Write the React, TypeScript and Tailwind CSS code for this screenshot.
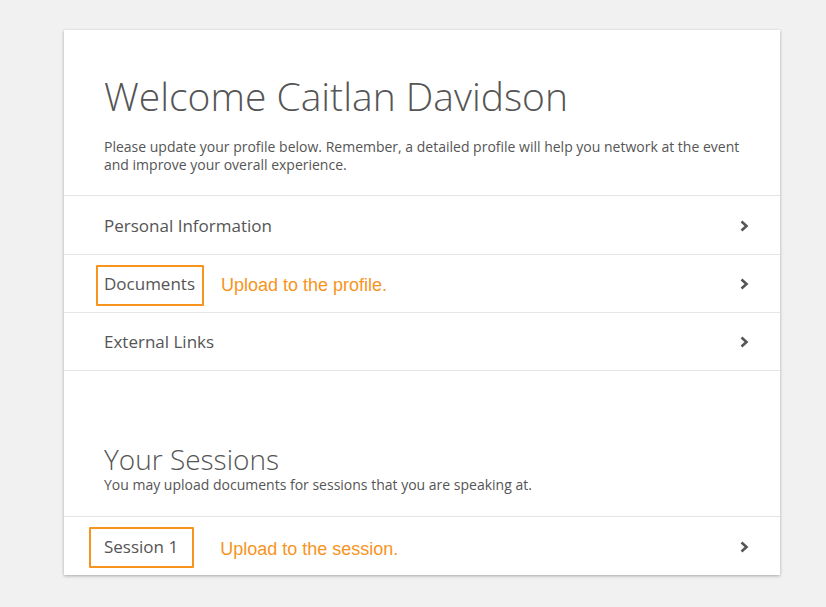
import React from "react";

const Chevron = () => (
  <svg width="12" height="14" viewBox="0 0 12 14" className="shrink-0">
    <path d="M3.5 2.5 L8.5 7 L3.5 11.5" fill="none" stroke="#555" strokeWidth="2.6" strokeLinejoin="miter" />
  </svg>
);

const Row = ({ children, border = "border-[#e6e6e6]" }: { children: React.ReactNode; border?: string }) => (
  <div className={`h-[58px] flex items-center pl-[40px] pr-[30px] border-t ${border}`}>
    <div className="flex-1 flex items-center">{children}</div>
    <Chevron />
  </div>
);

export default function App() {
  return (
    <div
      className="min-h-[607px] w-[826px] bg-[#f1f1f1] pt-[30px] pl-[64px]"
      style={{ fontFamily: "'Open Sans', sans-serif" }}
    >
      <div className="w-[716px] bg-white shadow-[0_1px_3px_rgba(0,0,0,0.3)]">
        <div className="pl-[40px] pr-[30px] pt-[42px] pb-[21px]">
          <h1 className="text-[39px] leading-[48px] font-light text-[#555]">Welcome Caitlan Davidson</h1>
          <p className="mt-[18px] text-[14px] leading-[18px] text-[#555]">
            Please update your profile below. Remember, a detailed profile will help you network at the event and improve your overall experience.
          </p>
        </div>
        <div className="border-t border-[#e1e6eb]">
          <Row border="border-transparent">
            <span className="text-[17px] text-[#555]">Personal Information</span>
          </Row>
          <Row>
            <span className="relative text-[17px] text-[#555]">
              Documents
              <span className="absolute -left-[8px] -right-[9px] -top-[6px] -bottom-[10px] border-2 border-[#f7941d] rounded-[1px]" />
            </span>
            <span
              className="ml-[26px] mt-[3px] text-[18px] text-[#f7941d]"
              style={{ fontFamily: "'Liberation Sans', Arial, sans-serif" }}
            >
              Upload to the profile.
            </span>
          </Row>
          <Row>
            <span className="text-[17px] text-[#555]">External Links</span>
          </Row>
        </div>
        <div className="border-t border-[#e6e6e6] pl-[40px] pt-[71px] pb-[22px]">
          <h2 className="text-[28px] leading-[34px] font-light text-[#555]">Your Sessions</h2>
          <p className="text-[14px] leading-[18px] text-[#555]">
            You may upload documents for sessions that you are speaking at.
          </p>
        </div>
        <div className="border-t border-[#e1e6eb]">
          <Row border="border-transparent">
            <span className="relative text-[17px] text-[#555]">
              Session 1
              <span className="absolute -left-[15px] -right-[16px] -top-[7px] -bottom-[9px] border-2 border-[#f7941d] rounded-[1px]" />
            </span>
            <span
              className="ml-[42px] mt-[5px] text-[18px] text-[#f7941d]"
              style={{ fontFamily: "'Liberation Sans', Arial, sans-serif" }}
            >
              Upload to the session.
            </span>
          </Row>
        </div>
      </div>
    </div>
  );
}
